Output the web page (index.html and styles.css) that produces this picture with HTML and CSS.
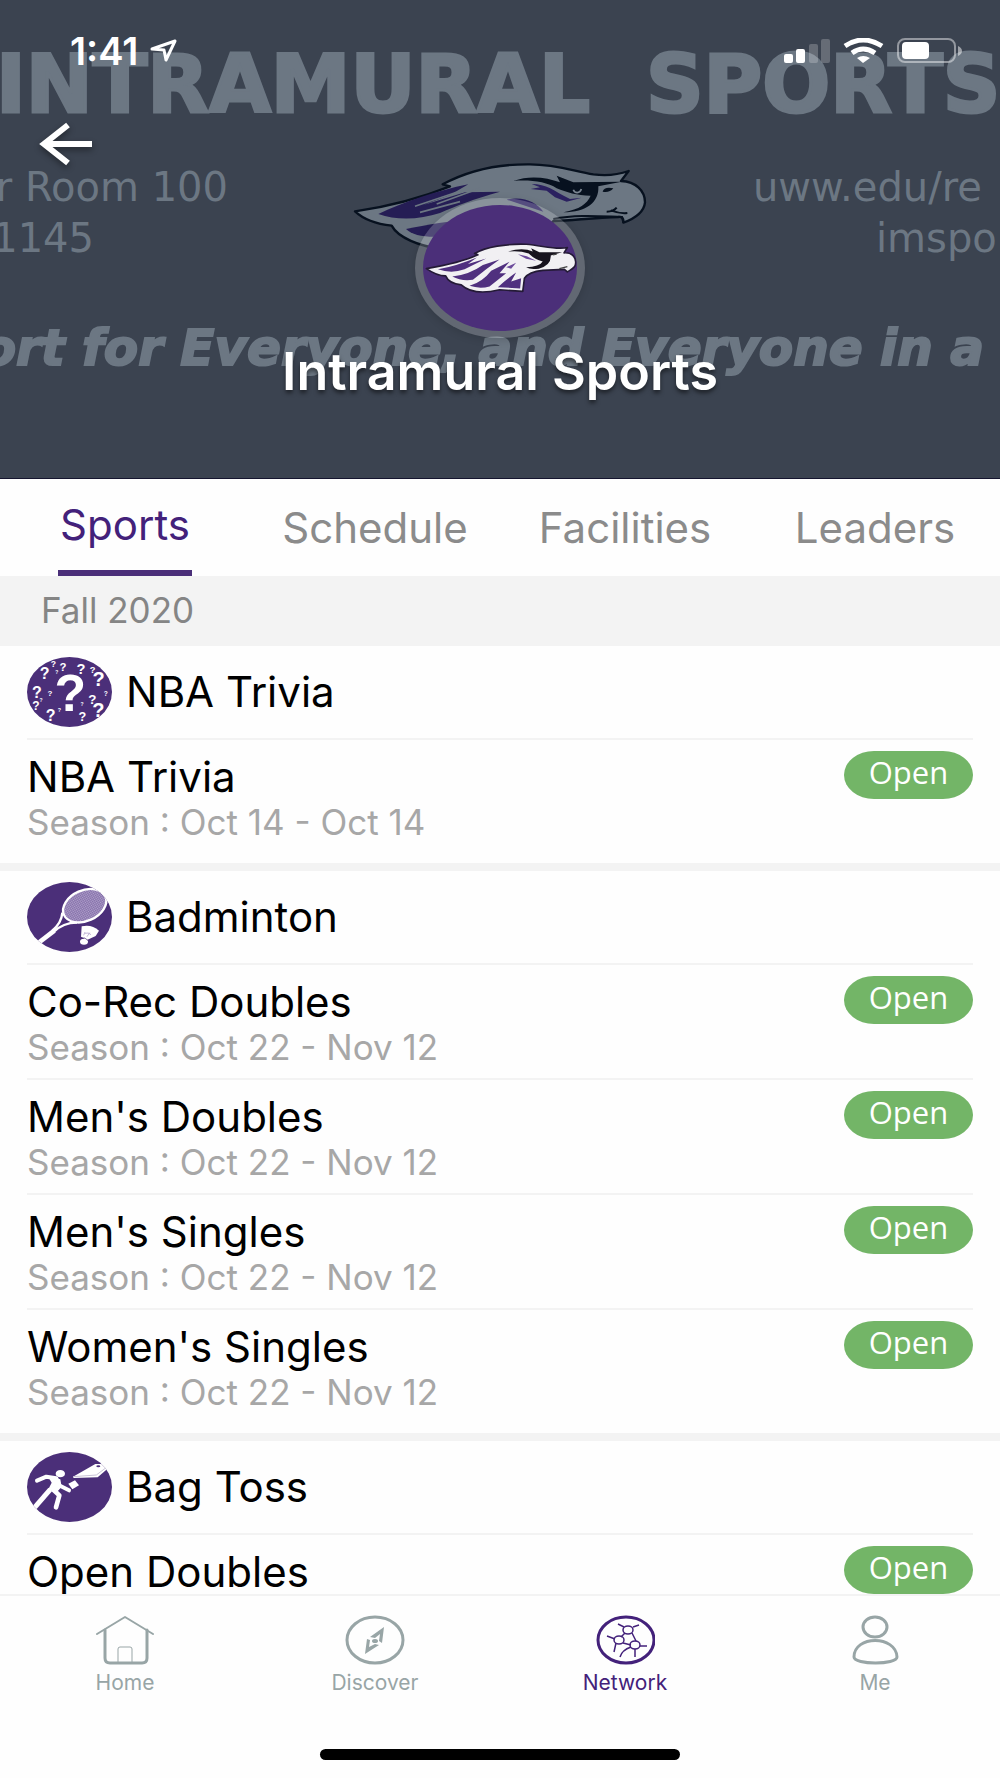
FILE: index.html
```
<!DOCTYPE html>
<html lang="en">
<head>
    <meta charset="UTF-8">
    <meta name="viewport" content="width=device-width, initial-scale=1.0">
    <title>Intramural Sports</title>
    <link rel="stylesheet" href="styles.css">
</head>
<body>
    <header class="hero">
        <!-- Cover artwork -->
        <svg class="cover" viewBox="0 0 1000 480" preserveAspectRatio="xMidYMid slice" aria-hidden="true">
            <g class="cover-title">
                <text x="-4" y="113">INTRAMURAL</text>
                <text x="646" y="113">SPORTS</text>
            </g>
            <g class="cover-info">
                <text x="228" y="202" text-anchor="end">r Room 100</text>
                <text x="94" y="253" text-anchor="end">1145</text>
                <text x="753" y="202">uww.edu/re</text>
                <text x="876" y="253">imspo</text>
            </g>
            <g class="cover-motto">
                <text x="984" y="366" text-anchor="end">ort for Everyone, and Everyone in a</text>
            </g>
            <svg x="340" y="150" width="320" height="200" viewBox="0 0 960 600">
                <path d="M45 187C150 172 240 148 330 112L308 106C390 62 480 45 570 46C650 46 700 66 760 76C805 82 838 76 866 66L843 96C888 98 915 125 915 160C912 190 880 210 850 221C852 208 846 203 835 204C760 206 700 214 640 216L540 330L300 300C240 290 175 268 155 230C110 225 75 215 45 187Z" fill="#6c7783" stroke="#07111f" stroke-width="7" stroke-linejoin="round"/>
                <path d="M115 195C190 160 290 125 385 106L330 138L250 168L375 130L480 128C400 150 350 170 300 192C240 212 170 215 115 195Z" fill="#251d55"/>
                <path d="M198 240C270 225 330 215 380 215L330 260C270 268 220 262 198 240Z" fill="#251d55"/>
                <path d="M225 172L350 130M290 165L420 118M240 190L360 158" stroke="#6c7783" stroke-width="5"/>
                <path d="M520 96C570 78 620 86 660 100L650 80L700 100L845 98L775 112C778 160 740 190 670 190C720 180 740 165 752 140C710 140 680 130 650 118C620 98 570 92 520 96Z" fill="#07111f"/>
                <path d="M575 105C620 105 640 125 690 150L725 146L680 158L645 145L620 125L572 120L600 115ZM500 152C550 140 590 160 610 188L540 165Z" fill="#2b2160"/>
                <path d="M700 122C704 134 720 134 724 120" fill="none" stroke="#7b8591" stroke-width="5"/>
                <path d="M788 128C790 116 805 114 820 118C812 128 800 131 788 128Z" fill="#07111f"/>
                <path d="M800 188C815 188 825 182 830 176M812 184C828 190 845 194 862 192M640 210C710 196 780 202 846 204L850 221" fill="none" stroke="#07111f" stroke-width="6"/>
            </svg>
        </svg>

        <div class="status">
            <div class="status-time">
                <span>1:41</span>
                <svg width="28" height="24" viewBox="0 0 28 24" aria-hidden="true">
                    <path d="M2 10L25 2L16 21L14 11Z" fill="none" stroke="#fff" stroke-width="3" stroke-linejoin="round"/>
                </svg>
            </div>
            <svg class="status-icons" width="180" height="26" viewBox="0 0 180 26" aria-hidden="true">
                <g fill="#fff">
                    <rect x="0" y="16" width="9" height="9" rx="2"/>
                    <rect x="12" y="11" width="9" height="14" rx="2"/>
                    <rect x="25" y="6" width="9" height="19" rx="2" opacity=".22"/>
                    <rect x="37" y="1" width="9" height="24" rx="2" opacity=".22"/>
                    <path d="M73 20Q79 16 86 20L79 25Z"/>
                </g>
                <g fill="none" stroke="#fff" stroke-width="5">
                    <path d="M61 8Q79 -4 98 8"/>
                    <path d="M68 15Q79 7 91 15"/>
                    <rect x="114" y="1" width="57" height="23" rx="7" stroke-width="2" opacity=".45"/>
                </g>
                <rect x="118" y="4" width="27" height="17" rx="4" fill="#fff"/>
                <path d="M174 8Q178 10 178 13T174 18Z" fill="#fff" opacity=".5"/>
            </svg>
        </div>

        <button class="back" type="button" aria-label="Back">
            <svg width="54" height="44" viewBox="0 0 54 44" aria-hidden="true">
                <path d="M53 22H6M29 3L5 22L29 41" fill="none" stroke="#fff" stroke-width="6"/>
            </svg>
        </button>

        <div class="badge">
            <svg viewBox="250 163 463 382" preserveAspectRatio="none" aria-hidden="true">
                <path d="M260 356C320 346 370 335 415 314L405 310C440 290 500 280 560 282C610 286 650 300 684 292L674 308C700 306 713 325 708 345C705 356 692 360 684 366L675 358L610 361C590 363 565 370 555 385L550 425L480 420C430 432 390 428 365 405C345 403 325 395 318 378C300 378 280 370 260 356Z" fill="#f1f0f3" stroke="#241a36" stroke-width="5" stroke-linejoin="round"/>
                <path d="M295 358Q350 348 412 322L385 342L440 325L375 358Q335 372 295 358ZM338 380Q390 374 430 345L480 328L440 358L400 390Q365 395 338 380ZM390 408Q430 395 455 362L510 335L480 370L500 370L450 410Q420 418 390 408ZM475 412Q505 385 530 368L515 395L545 385L542 416Z" fill="#50307f"/>
                <path d="M505 304Q550 290 580 304L575 294L600 306L668 306L634 316Q636 345 598 356Q572 360 560 352Q600 350 610 334Q585 328 568 310Q540 300 505 304Z" fill="#17131e"/>
                <path d="M535 312L562 318L590 332L560 326ZM500 352L530 338L515 356Z" fill="#6c4b9b"/>
                <path d="M660 356L684 350M640 314L652 312" stroke="#444" stroke-width="4"/>
            </svg>
        </div>
        <h1>Intramural Sports</h1>
    </header>

    <nav class="tabs">
        <a class="active" href="#sports">Sports</a>
        <a href="#schedule">Schedule</a>
        <a href="#facilities">Facilities</a>
        <a href="#leaders">Leaders</a>
    </nav>

    <main class="list" id="sports">
        <h2 class="term">Fall 2020</h2>

        <section class="group">
            <div class="group-head">
                <svg class="sport-icon" viewBox="0 0 255 210" preserveAspectRatio="none" aria-hidden="true">
                    <g class="marks">
                        <text x="130" y="163" font-size="155">?</text>
                        <text x="53" y="67" font-size="48">?</text>
                        <text x="79" y="31" font-size="26">?</text>
                        <text x="89" y="51" font-size="15">?</text>
                        <text x="108" y="43" font-size="34">?</text>
                        <text x="162" y="50" font-size="44">?</text>
                        <text x="197" y="48" font-size="28">?</text>
                        <text x="215" y="88" font-size="60">?</text>
                        <text x="30" y="123" font-size="48">?</text>
                        <text x="69" y="117" font-size="24">?</text>
                        <text x="27" y="158" font-size="36">?</text>
                        <text x="42" y="135" font-size="15">?</text>
                        <text x="71" y="192" font-size="48">?</text>
                        <text x="97" y="166" font-size="16">?</text>
                        <text x="196" y="140" font-size="40">?</text>
                        <text x="236" y="117" font-size="20">?</text>
                        <text x="165" y="146" font-size="15">?</text>
                        <text x="214" y="179" font-size="60">?</text>
                        <text x="166" y="192" font-size="38">?</text>
                    </g>
                </svg>
                <h3>NBA Trivia</h3>
            </div>
            <div class="row">
                <div>
                    <h4>NBA Trivia</h4>
                    <p>Season : Oct 14 - Oct 14</p>
                </div>
                <button class="open" type="button">Open</button>
            </div>
        </section>

        <section class="group">
            <div class="group-head">
                <svg class="sport-icon" viewBox="0 0 255 210" preserveAspectRatio="none" aria-hidden="true">
                    <defs>
                        <pattern id="net" width="5" height="5" patternUnits="userSpaceOnUse" patternTransform="rotate(50)">
                            <rect width="5" height="5" fill="#b3a5cc"/>
                            <path d="M0 0H5M0 0V5" stroke="#694e96" stroke-width="2"/>
                        </pattern>
                    </defs>
                    <ellipse cx="173" cy="71" rx="68" ry="46" transform="rotate(-24 173 71)" fill="url(#net)" stroke="#fff" stroke-width="7"/>
                    <path d="M106 92Q104 122 76 146M150 122Q108 122 80 150" fill="none" stroke="#fff" stroke-width="7"/>
                    <path d="M82 146L30 186" stroke="#fff" stroke-width="14"/>
                    <path d="M164 133Q194 126 216 146L206 162L180 174L162 164Z" fill="#fff"/>
                    <path d="M170 160L174 150M180 164L188 152M174 154Q184 150 192 158" stroke="#a493c3" stroke-width="2" fill="none"/>
                    <ellipse cx="171" cy="179" rx="12" ry="9" fill="#fff"/>
                    <path d="M161 168Q174 164 184 176" fill="none" stroke="#4b2f79" stroke-width="2"/>
                </svg>
                <h3>Badminton</h3>
            </div>
            <div class="row">
                <div>
                    <h4>Co-Rec Doubles</h4>
                    <p>Season : Oct 22 - Nov 12</p>
                </div>
                <button class="open" type="button">Open</button>
            </div>
            <div class="row">
                <div>
                    <h4>Men's Doubles</h4>
                    <p>Season : Oct 22 - Nov 12</p>
                </div>
                <button class="open" type="button">Open</button>
            </div>
            <div class="row">
                <div>
                    <h4>Men's Singles</h4>
                    <p>Season : Oct 22 - Nov 12</p>
                </div>
                <button class="open" type="button">Open</button>
            </div>
            <div class="row">
                <div>
                    <h4>Women's Singles</h4>
                    <p>Season : Oct 22 - Nov 12</p>
                </div>
                <button class="open" type="button">Open</button>
            </div>
        </section>

        <section class="group">
            <div class="group-head">
                <svg class="sport-icon" viewBox="0 0 255 210" preserveAspectRatio="none" aria-hidden="true">
                    <ellipse cx="100" cy="65" rx="14" ry="11" fill="#fff"/>
                    <path d="M30 86L58 74L88 79L96 100L126 115" fill="none" stroke="#fff" stroke-width="12" stroke-linecap="round" stroke-linejoin="round"/>
                    <path d="M62 72L100 82L104 104L88 122L64 112L74 92Z" fill="#fff"/>
                    <path d="M70 112L18 172" stroke="#fff" stroke-width="15"/>
                    <path d="M80 114L97 130L87 166" fill="none" stroke="#fff" stroke-width="14" stroke-linecap="round" stroke-linejoin="round"/>
                    <path d="M124 95L144 85L156 100L136 112Z" fill="#fff"/>
                    <path d="M138 74L205 36L228 36L240 52L212 76L140 78Z" fill="#fff"/>
                    <path d="M138 74L208 69L236 48" fill="none" stroke="#c9c2d6" stroke-width="3"/>
                    <ellipse cx="214" cy="43" rx="6" ry="3" fill="#4b2f79"/>
                </svg>
                <h3>Bag Toss</h3>
            </div>
            <div class="row">
                <div>
                    <h4>Open Doubles</h4>
                    <p>Season : Oct 22 - Nov 12</p>
                </div>
                <button class="open" type="button">Open</button>
            </div>
        </section>
    </main>

    <footer class="bottom">
        <nav class="bottom-nav">
            <a href="#home">
                <svg width="60" height="50" viewBox="0 0 60 50" aria-hidden="true">
                    <g fill="none" stroke="currentColor" stroke-linejoin="round" stroke-linecap="round">
                        <path d="M2 19L30 2L58 19" stroke-width="2"/>
                        <path d="M10 15V43Q10 48 15 48H47Q52 48 52 43V15" stroke-width="3"/>
                        <path d="M23 47V34Q23 32 25 32H35Q37 32 37 34V47" stroke-width="1"/>
                    </g>
                </svg>
                <span>Home</span>
            </a>
            <a href="#discover">
                <svg width="60" height="50" viewBox="0 0 60 50" aria-hidden="true">
                    <ellipse cx="30" cy="25" rx="28" ry="23" fill="none" stroke="currentColor" stroke-width="3"/>
                    <path d="M39 12L25 22L30 23L35 19L34 26L37 28ZM20 39L34 30L30 29L24 32L25 25L22 24Z" fill="currentColor"/>
                    <ellipse cx="30" cy="26" rx="3" ry="2" fill="currentColor"/>
                </svg>
                <span>Discover</span>
            </a>
            <a class="current" href="#network">
                <svg width="60" height="50" viewBox="0 0 60 50" aria-hidden="true">
                    <g fill="none" stroke="currentColor">
                        <ellipse cx="31" cy="25" rx="28" ry="23" stroke-width="3"/>
                        <g stroke-width="1.5">
                            <ellipse cx="33" cy="15" rx="5" ry="4"/>
                            <ellipse cx="24" cy="25" rx="5" ry="4"/>
                            <ellipse cx="40" cy="30" rx="5" ry="4"/>
                            <path d="M23 9L29 12M44 10L38 12M30 18L26 22M37 18L41 26M28 28L36 30M20 24L12 21M21 28L19 37M36 32Q27 35 25 42M40 34V42M45 31H52"/>
                        </g>
                    </g>
                </svg>
                <span>Network</span>
            </a>
            <a href="#me">
                <svg width="60" height="50" viewBox="0 0 60 50" aria-hidden="true">
                    <g fill="none" stroke="currentColor" stroke-width="3">
                        <ellipse cx="30" cy="12" rx="12" ry="10"/>
                        <path d="M9 42C9 20 51 20 52 42C52 50 9 50 9 42Z"/>
                    </g>
                </svg>
                <span>Me</span>
            </a>
        </nav>
        <div class="home-bar"></div>
    </footer>
</body>
</html>
```
FILE: styles.css
```
* {
    box-sizing: border-box;
}
body {
    margin: 0;
    height: 100vh;
    display: flex;
    flex-direction: column;
    overflow: hidden;
    background: #fefefe;
    color: #000;
    font-family: Inter, Roboto, sans-serif;
}
h1, h2, h3, h4, p {
    margin: 0;
    font-weight: 400;
}
a {
    color: inherit;
    text-decoration: none;
}
button {
    border: 0;
    font-family: inherit;
    cursor: pointer;
}

/* Header */
.hero {
    position: relative;
    flex: none;
    display: flex;
    flex-direction: column;
    align-items: center;
    padding-bottom: 76px;
    background: #3b4350;
    border-bottom: 1px solid #15152f;
    color: #fff;
}
.hero > * {
    position: relative;
}
.hero > .cover {
    position: absolute;
    top: 0;
    left: 0;
    width: 100%;
    height: 100%;
}
.cover text {
    fill: #6c7783;
    font-family: "DejaVu Sans", sans-serif;
}
.cover-title text {
    font-size: 80px;
    font-weight: 700;
    stroke: #6c7783;
    stroke-width: 3px;
}
.cover-info text {
    font-size: 40px;
}
.cover-motto text {
    font-size: 50px;
    font-weight: 700;
    font-style: italic;
    stroke: #6c7783;
    stroke-width: 2px;
}
.status {
    align-self: stretch;
    display: flex;
    justify-content: space-between;
    align-items: center;
    height: 102px;
    padding: 0 36px 0 70px;
}
.status-time {
    display: flex;
    align-items: center;
    gap: 12px;
    font-size: 38px;
    line-height: 40px;
    font-weight: 600;
}
.back {
    align-self: flex-start;
    height: 44px;
    margin: 20px 0 0 39px;
    padding: 0;
    background: none;
    filter: drop-shadow(0 3px 3px rgba(0, 0, 0, 0.4));
}
.badge {
    width: 170px;
    height: 140px;
    margin-top: 32px;
    padding: 7px 8px;
    border-radius: 50%;
    background: rgba(255, 255, 255, 0.2);
    box-shadow: 0 2px 8px rgba(0, 0, 0, 0.15);
}
.badge svg {
    display: block;
    width: 100%;
    height: 100%;
    border-radius: 50%;
    background: #4b2f79;
}
h1 {
    margin-top: 4px;
    font-size: 52px;
    line-height: 60px;
    font-weight: 600;
    text-shadow: 0 3px 4px rgba(0, 0, 0, 0.5);
}

/* Tabs */
.tabs {
    flex: none;
    display: grid;
    grid-template-columns: repeat(4, 1fr);
    justify-items: center;
    height: 97px;
    color: #8b8b8b;
    font-size: 42px;
    line-height: 97px;
}
.tabs .active {
    padding: 0 2px;
    border-bottom: 7px solid #4b2f79;
    color: #43217a;
    line-height: 91px;
}

/* Sports list */
.list {
    flex: 1;
    min-height: 0;
    overflow: hidden;
}
.term {
    height: 70px;
    padding-left: 41px;
    background: #f3f3f3;
    color: #858585;
    font-size: 35px;
    line-height: 68px;
}
.group {
    padding: 0 27px 11px;
    border-bottom: 8px solid #f3f3f3;
}
.group-head {
    display: flex;
    align-items: center;
    gap: 14px;
    height: 94px;
    border-bottom: 2px solid #f3f3f3;
}
.sport-icon {
    width: 85px;
    height: 70px;
    border-radius: 50%;
    background: #4b2f79;
}
.marks text {
    fill: #fff;
    font-family: "Liberation Sans", sans-serif;
    font-weight: 700;
    text-anchor: middle;
}
h3, h4 {
    font-size: 42px;
    line-height: 48px;
}
.row {
    display: flex;
    justify-content: space-between;
    align-items: flex-start;
    height: 115px;
    padding-top: 11px;
    border-bottom: 2px solid #f3f3f3;
}
.row:last-child {
    height: 112px;
    border-bottom: 0;
}
.row h4 {
    padding-top: 2px;
}
.row p {
    color: #a7a7a7;
    font-size: 35px;
    line-height: 42px;
}
.open {
    width: 129px;
    height: 48px;
    padding: 0 0 6px;
    border-radius: 30px / 24px;
    background: #73b567;
    color: #fff;
    font-family: "Open Sans", sans-serif;
    font-size: 31px;
    line-height: 42px;
}

/* Bottom bar */
.bottom {
    flex: none;
    padding-bottom: 18px;
    background: #fefefe;
    border-top: 2px solid #f3f3f3;
}
.bottom-nav {
    display: grid;
    grid-template-columns: repeat(4, 1fr);
    height: 153px;
    padding-top: 19px;
    color: #98a5a6;
    font-size: 21px;
    line-height: 36px;
}
.bottom-nav a {
    display: flex;
    flex-direction: column;
    align-items: center;
}
.bottom-nav .current {
    color: #43217a;
}
.home-bar {
    width: 36%;
    height: 11px;
    margin: 0 auto;
    border-radius: 6px;
    background: #000;
}
```
